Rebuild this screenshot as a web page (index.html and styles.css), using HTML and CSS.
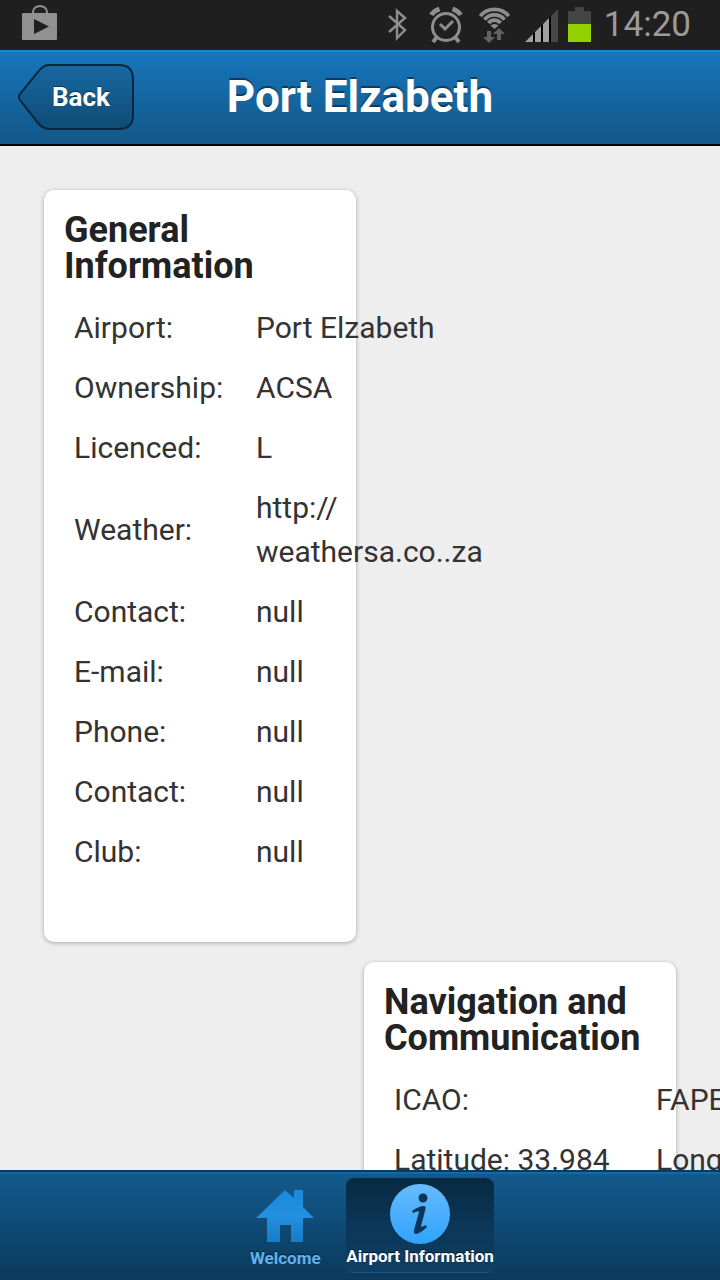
FILE: index.html
```html
<!DOCTYPE html>
<html lang="en">
<head>
<meta charset="utf-8">
<meta name="viewport" content="width=device-width, initial-scale=1">
<title>Port Elzabeth</title>
<link rel="stylesheet" href="styles.css">
</head>
<body>
<div class="app">
  <div class="status">
    <svg class="status-store" width="36" height="36" viewBox="0 0 36 36" aria-hidden="true">
      <path d="M11 9V7a7 6 0 0 1 14 0v2" fill="none" stroke="#919191" stroke-width="2"/>
      <rect x="0" y="8" width="35" height="27" rx="1" fill="#919191"/>
      <path d="M12 14v15l15-7.500z" fill="#1f1f1f"/>
    </svg>
    <svg class="status-icons" width="195" height="40" viewBox="0 0 195 40" aria-hidden="true">
      <path d="M1 12l16 14-8 8V7l8 7L1 28" fill="none" stroke="#8e8e8e" stroke-width="2.400"/>
      <g fill="none" stroke="#8e8e8e" stroke-width="3">
        <circle cx="58" cy="23" r="13.500"/>
        <path d="M52 20l5 5 8-8"/>
        <path d="M49 33l-4 5M67 33l4 5" stroke-width="4"/>
        <path d="M43.500 11q2-4 8-6M64.500 5q6 2 8 6" stroke-width="5"/>
      </g>
      <g fill="none" stroke="#8e8e8e" stroke-width="3.800">
        <path d="M92.300 12.100A18.500 18.500 0 0 1 120.700 12.100"/>
        <path d="M96.500 15.600A13 13 0 0 1 116.500 15.600"/>
        <path d="M100.500 19A7.800 7.800 0 0 1 112.500 19"/>
      </g>
      <path d="M102.500 21.500q4-3 8 0l-4 3.500z" fill="#8e8e8e"/>
      <path d="M99 27h4v6h4l-6 6-6-6h4z" fill="#626262"/>
      <path d="M109 36v-6h-4l6-6 6 6h-4v6z" fill="#626262"/>
      <path d="M137 38l33-33v33z" fill="#000"/>
      <path d="M137 38l8-8v8zM147 38V28l6-6v16zM155 38V20l6-6v24z" fill="#a0a0a0"/>
      <path d="M163 38V12l7-7v33z" fill="#484848"/>
    </svg>
    <svg class="battery" width="23" height="35" viewBox="0 0 23 35" aria-hidden="true">
      <path d="M0 4h7V0h9v4h7v13H0z" fill="#444"/>
      <path d="M0 17h23v18H0z" fill="#92d000"/>
    </svg>
    <span class="clock">14:20</span>
  </div>

  <header class="topbar">
    <button class="back" type="button">
      <svg class="back-shape" viewBox="0 0 116 66" aria-hidden="true">
        <defs>
          <linearGradient id="backFill" x1="0" y1="0" x2="0" y2="1">
            <stop offset="0" stop-color="#1669a3"/>
            <stop offset="1" stop-color="#104b74"/>
          </linearGradient>
        </defs>
        <path d="M31 1H101Q115 1 115 15V51Q115 65 101 65H31Q25 65 20 59L2 36Q0 33 2 30L20 8Q25 1 31 1Z" fill="url(#backFill)" stroke="#08263d" stroke-width="2"/>
      </svg>
      <span class="back-label">Back</span>
    </button>
    <h1 class="title">Port Elzabeth</h1>
  </header>

  <main class="content">
    <section class="card card-general">
      <h2 class="card-title">General Information</h2>
      <table class="facts">
        <tr><th scope="row">Airport:</th><td>Port Elzabeth</td></tr>
        <tr><th scope="row">Ownership:</th><td>ACSA</td></tr>
        <tr><th scope="row">Licenced:</th><td>L</td></tr>
        <tr><th scope="row">Weather:</th><td>http://<br>weathersa.co..za</td></tr>
        <tr><th scope="row">Contact:</th><td>null</td></tr>
        <tr><th scope="row">E-mail:</th><td>null</td></tr>
        <tr><th scope="row">Phone:</th><td>null</td></tr>
        <tr><th scope="row">Contact:</th><td>null</td></tr>
        <tr><th scope="row">Club:</th><td>null</td></tr>
      </table>
    </section>
    <section class="card card-nav">
      <h2 class="card-title">Navigation and Communication</h2>
      <table class="facts facts-wide">
        <tr><th scope="row">ICAO:</th><td>FAPE</td></tr>
        <tr><td>Latitude: 33.984</td><td>Longitude:</td></tr>
      </table>
    </section>
  </main>

  <nav class="tabs">
    <button class="tab" type="button">
      <svg width="60" height="60" viewBox="0 0 60 60" aria-hidden="true">
        <defs>
          <linearGradient id="homeFill" x1="0" y1="0" x2="0" y2="1">
            <stop offset="0" stop-color="#1d88d8"/>
            <stop offset="0.500" stop-color="#2390e0"/>
            <stop offset="1" stop-color="#187cc6"/>
          </linearGradient>
        </defs>
        <path d="M30 4L39 12V4H48V21L59 32H48V56H36V39H25V56H12V32H1Z" fill="url(#homeFill)"/>
      </svg>
      <span class="tab-label">Welcome</span>
    </button>
    <button class="tab tab-active" type="button" aria-current="page">
      <svg width="60" height="60" viewBox="0 0 60 60" aria-hidden="true">
        <defs>
          <linearGradient id="infoFill" x1="0" y1="0" x2="0" y2="1">
            <stop offset="0" stop-color="#67bbff"/>
            <stop offset="1" stop-color="#30a3fb"/>
          </linearGradient>
        </defs>
        <circle cx="30" cy="30" r="30" fill="url(#infoFill)"/>
        <circle cx="33" cy="14" r="4.500" fill="#0b3657"/>
        <path d="M22 27Q29 22 34 22Q36 22 35.500 25L31 42Q31 44 36 41L37 43Q31 49 26 50Q23 50 24 46L29 28Q29 26 23 29Z" fill="#0b3657"/>
      </svg>
      <span class="tab-label">Airport Information</span>
    </button>
  </nav>
</div>
</body>
</html>
```
FILE: styles.css
```css
* {
  box-sizing: border-box;
}

body {
  margin: 0;
  font-family: Roboto, "Liberation Sans", sans-serif;
  color: #333;
  background: #eee;
}

button {
  padding: 0;
  border: 0;
  background: none;
  font: inherit;
}

.app {
  display: flex;
  flex-direction: column;
  height: 100vh;
  overflow: hidden;
}

.status {
  display: flex;
  align-items: center;
  flex: none;
  height: 50px;
  padding: 0 29px 0 22px;
  background: #1f1f1f;
}

.status-store {
  margin-right: auto;
  margin-bottom: 4px;
}

.status-icons {
  margin-bottom: 2px;
}

.battery {
  margin: 0 13px 2px -15px;
}

.clock {
  font-size: 35px;
  line-height: 50px;
  color: #9b9b9b;
}

.topbar {
  display: grid;
  grid-template-columns: 1fr auto 1fr;
  align-items: center;
  flex: none;
  height: 96px;
  padding: 0 18px 2px;
  border-top: 2px solid #1f85c7;
  border-bottom: 2px solid #000;
  background: linear-gradient(#1775bb, #125787);
}

.back {
  display: grid;
  justify-self: start;
  width: 116px;
  color: #fff;
}

.back-shape,
.back-label {
  grid-area: 1 / 1;
}

.back-label {
  align-self: center;
  padding-left: 10px;
  font-size: 26px;
  font-weight: 700;
  text-shadow: 0 -1px 0 #0a3553;
}

.title {
  margin: 0;
  font-size: 44px;
  line-height: 60px;
  font-weight: 700;
  color: #fff;
  text-shadow: 0 -2px 0 #0c3d60;
}

.content {
  display: grid;
  grid-template-columns: 1fr 1fr;
  align-content: start;
  gap: 20px 8px;
  flex: 1;
  min-height: 0;
  padding: 44px;
  overflow: hidden;
}

.card {
  min-width: 0;
  padding: 22px 20px 60px;
  border-radius: 10px;
  background: #fff;
  box-shadow: 0 1px 4px rgba(0, 0, 0, 0.3);
}

.card-nav {
  grid-area: 2 / 2;
}

.card-title {
  margin: 0 0 14px;
  font-size: 36px;
  line-height: 36px;
  font-weight: 700;
  color: #222;
}

.facts {
  border-collapse: collapse;
  font-size: 30px;
  line-height: 44px;
  white-space: nowrap;
}

.facts th,
.facts td {
  padding: 8px 10px;
  font-weight: 400;
  text-align: left;
}

.facts th {
  min-width: 182px;
}

.facts-wide th {
  min-width: 262px;
}

.tabs {
  display: flex;
  justify-content: center;
  align-items: flex-start;
  gap: 2px;
  flex: none;
  height: 110px;
  padding: 6px 0;
  border-top: 2px solid #0a3a5c;
  background: linear-gradient(#1668a3 0, #1668a3 2px, #125a8d 2px, #0b395b 100%);
}

.tab {
  display: flex;
  flex-direction: column;
  align-items: center;
  min-width: 118px;
  height: 94px;
  padding-top: 8px;
  border-radius: 8px;
  color: #62b3ee;
}

.tab-active {
  min-width: 144px;
  padding-top: 6px;
  color: #fff;
  background: linear-gradient(#082a42, #0b3657 50%, #0e3f64);
  box-shadow: 0 1px 0 #1a5581;
}

.tab-label {
  font-size: 17px;
  line-height: 24px;
  font-weight: 700;
  white-space: nowrap;
  text-shadow: 0 -1px 0 #04192a;
}
```
